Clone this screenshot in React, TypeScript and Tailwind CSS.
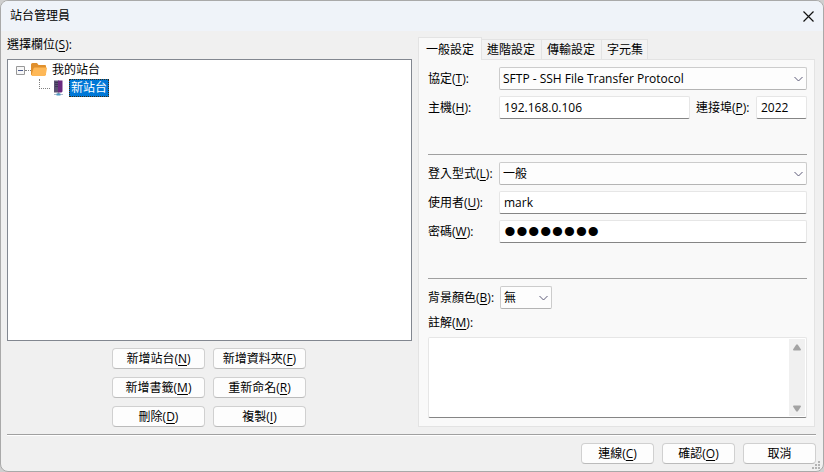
import { useState } from 'react';
import type { ReactNode } from 'react';

const tabs = ['一般設定', '進階設定', '傳輸設定', '字元集'];

const siteActions = [
  { label: '新增站台', hotkey: 'N' },
  { label: '新增資料夾', hotkey: 'F' },
  { label: '新增書籤', hotkey: 'M' },
  { label: '重新命名', hotkey: 'R' },
  { label: '刪除', hotkey: 'D' },
  { label: '複製', hotkey: 'I' },
];

const inputClass =
  'block h-[23px] w-full min-w-0 rounded-[2px] border border-[#e6e6e6] border-b-[#858585] bg-white px-1 text-black outline-none';

function Hotkey({ children }: { children: ReactNode }) {
  return (
    <>
      (<span className="underline underline-offset-2">{children}</span>)
    </>
  );
}

function FieldLabel({ id, text, hotkey }: { id: string; text: string; hotkey: string }) {
  return (
    <label htmlFor={id} className="whitespace-nowrap">
      {text}
      <Hotkey>{hotkey}</Hotkey>:
    </label>
  );
}

function PushButton({ label, hotkey, className }: { label: string; hotkey?: string; className: string }) {
  return (
    <button
      type="button"
      className={`flex h-[21px] items-center justify-center rounded border border-[#d0d0d0] border-b-[#bbbbbb] bg-[#fdfdfd] leading-4 whitespace-nowrap hover:bg-[#e0eef9] ${className}`}
    >
      <span>
        {label}
        {hotkey && <Hotkey>{hotkey}</Hotkey>}
      </span>
    </button>
  );
}

function SelectBox({ id, options, className }: { id: string; options: string[]; className: string }) {
  return (
    <div className={`relative ${className}`}>
      <select
        id={id}
        className="block h-[23px] w-full appearance-none rounded-[2px] border border-[#cccccc] border-b-[#b4b4b4] bg-[#fdfdfd] pr-5 pl-[3px] outline-none"
      >
        {options.map((option) => (
          <option key={option}>{option}</option>
        ))}
      </select>
      <svg
        className="pointer-events-none absolute top-[9px] right-1 h-[7px] w-[9px]"
        viewBox="0 0 9 7"
        fill="none"
        stroke="#5d5a78"
      >
        <path d="M0.5 1 4.5 5 8.5 1" />
      </svg>
    </div>
  );
}

function FolderIcon() {
  return (
    <svg className="h-4 w-4" viewBox="0 0 16 16">
      <path d="M0 2.500Q0 1 1.500 1H6l1.500 2H14q1 0 1 1v9H0z" fill="#e0902d" />
      <path d="M2.500 6.500Q2.800 5.500 4 5.500h11.500q.7 0 .5.8l-1.200 6.700q-.2 1-1.300 1H1.500Q.4 14 .6 12.800z" fill="#feb857" />
    </svg>
  );
}

function ServerIcon() {
  return (
    <svg className="h-4 w-4" viewBox="0 0 16 16">
      <path d="M4 .5h5v12H4z" fill="#5a5272" />
      <path d="M8 .5h4.500v11l-1 1H8z" fill="#6b2a80" />
      <path d="M5 2.500h3M5 4.500h3M5 6.500h3" stroke="#3f3556" />
      <path d="M8.500 12.500v2" stroke="#8c8c9c" strokeWidth="2" />
      <path d="M4 14.500h9" stroke="#a9b9cb" />
      <path d="M6.500 14.500h4" stroke="#4f9cc4" strokeWidth="2" />
    </svg>
  );
}

function SiteTree() {
  return (
    <ul className="min-h-[282px] flex-1 border border-[#828790] bg-white pt-px pl-2">
      <li>
        <div className="flex h-[18px] items-center">
          <button type="button" aria-label="收合">
            <svg className="h-[9px] w-[9px]" viewBox="0 0 9 9">
              <path d="M.5.5h8v8h-8z" fill="#f7f7f7" stroke="#989898" />
              <path d="M2 4.500h5" stroke="#4b5a8c" />
            </svg>
          </button>
          <span className="w-[6px] border-t border-dotted border-[#808080]" />
          <FolderIcon />
          <span className="ml-[3px] px-[2px]">我的站台</span>
        </div>
        <ul>
          <li className="flex h-[18px] items-center pl-[23px]">
            <span className="h-[10px] w-[11px] self-start border-b border-l border-dotted border-[#808080]" />
            <ServerIcon />
            <span className="ml-[3px] flex h-[18px] items-center border border-dotted border-[#3a2a10] bg-[#0078d7] px-px text-white">
              新站台
            </span>
          </li>
        </ul>
      </li>
    </ul>
  );
}

export default function App() {
  const [activeTab, setActiveTab] = useState(0);

  return (
    <div className="min-h-screen bg-[#cfcfcf] font-['Open_Sans','Noto_Sans_CJK_TC',sans-serif] text-xs text-black">
      <div className="flex min-h-screen flex-col overflow-hidden rounded-lg border border-[#a9a9a9] bg-[#f0f0f0]">
        {/* Title bar */}
        <header className="flex h-[30px] items-center justify-between bg-[#eff3f9] pr-[9px] pl-[9px]">
          <h1>站台管理員</h1>
          <button type="button" aria-label="關閉">
            <svg className="h-[11px] w-[11px]" viewBox="0 0 11 11" stroke="#111111" strokeWidth="1.2">
              <path d="M.5.5l10 10M10.500.5l-10 10" />
            </svg>
          </button>
        </header>

        <main className="flex flex-1 gap-[6px] pt-[5px] pr-2 pb-[7px] pl-[6px]">
          {/* Site list */}
          <section className="flex w-[405px] min-w-0 flex-col">
            <h2 className="h-[23px] leading-[18px]">
              選擇欄位
              <Hotkey>S</Hotkey>:
            </h2>
            <SiteTree />
            <div className="mt-[7px] grid grid-cols-[93px_93px] justify-center gap-2 pr-px">
              {siteActions.map((action) => (
                <PushButton key={action.label} {...action} className="w-full" />
              ))}
            </div>
          </section>

          {/* Settings */}
          <section className="flex min-w-0 flex-1 flex-col">
            <div className="flex items-end pt-px" role="tablist">
              {tabs.map((tab, index) => (
                <button
                  key={tab}
                  type="button"
                  role="tab"
                  aria-selected={index === activeTab}
                  onClick={() => setActiveTab(index)}
                  className={
                    index === activeTab
                      ? 'z-10 -mb-px h-[23px] border border-b-0 border-[#e3e3e3] bg-[#f9f9f9] px-[7px] leading-[19px]'
                      : 'h-5 border border-b-0 border-l-0 border-[#e3e3e3] bg-[#f3f3f3] pr-[6px] pl-[5px] leading-[19px] last:pr-1'
                  }
                >
                  {tab}
                </button>
              ))}
            </div>

            <div className="flex flex-1 flex-col border border-[#e3e3e3] bg-[#f9f9f9] pt-[7px] pr-[7px] pb-2 pl-[9px]">
              <div className="grid grid-cols-[71px_minmax(0,1fr)] items-center gap-y-[6px]">
                <FieldLabel id="protocol" text="協定" hotkey="T" />
                <SelectBox id="protocol" options={['SFTP - SSH File Transfer Protocol']} className="w-full" />
                <FieldLabel id="host" text="主機" hotkey="H" />
                <div className="flex items-center">
                  <input id="host" className={inputClass} defaultValue="192.168.0.106" />
                  <span className="w-[66px] shrink-0 pl-[6px]">
                    <FieldLabel id="port" text="連接埠" hotkey="P" />
                  </span>
                  <div className="w-[51px] shrink-0">
                    <input id="port" className={inputClass} defaultValue="2022" />
                  </div>
                </div>
              </div>

              <hr className="mt-[35px] mb-[7px] border-[#a0a0a0]" />

              <div className="grid grid-cols-[71px_minmax(0,1fr)] items-center gap-y-[6px]">
                <FieldLabel id="logon" text="登入型式" hotkey="L" />
                <SelectBox id="logon" options={['一般']} className="w-full" />
                <FieldLabel id="user" text="使用者" hotkey="U" />
                <input id="user" className={inputClass} defaultValue="mark" />
                <FieldLabel id="password" text="密碼" hotkey="W" />
                <input
                  id="password"
                  type="password"
                  className={`${inputClass} font-['Liberation_Sans',sans-serif] text-[34px]`}
                  defaultValue="password"
                />
              </div>

              <hr className="mt-[35px] mb-[7px] border-[#a0a0a0]" />

              <div className="grid grid-cols-[72px_minmax(0,1fr)] items-center">
                <FieldLabel id="color" text="背景顏色" hotkey="B" />
                <SelectBox id="color" options={['無']} className="w-[52px]" />
              </div>

              <div className="mt-[5px] h-[23px] leading-[18px]">
                <FieldLabel id="comments" text="註解" hotkey="M" />
              </div>
              <div className="flex min-h-[81px] flex-1 rounded-[2px] border border-[#e6e6e6] border-b-[#858585] bg-white">
                <textarea id="comments" className="min-w-0 flex-1 resize-none px-1 outline-none" />
                <div className="my-px mr-px flex w-4 flex-col items-center justify-between bg-[#f0f0f0] pt-[5px] pb-1">
                  <svg className="h-[7px] w-2" viewBox="0 0 8 7" fill="#a3a3a3">
                    <path d="M3.300.5h1.400L8 5.500 7.500 6.500H.5L0 5.500z" />
                  </svg>
                  <svg className="h-[7px] w-2" viewBox="0 0 8 7" fill="#a3a3a3">
                    <path d="M3.300 6.500h1.400L8 1.500 7.500.5H.5L0 1.500z" />
                  </svg>
                </div>
              </div>
            </div>
          </section>
        </main>

        {/* Dialog buttons */}
        <footer className="relative pr-[7px] pb-[7px] pl-[6px]">
          <div className="h-[2px] border-t border-[#a0a0a0] bg-white" />
          <div className="flex justify-end gap-2 pt-[7px]">
            <PushButton label="連線" hotkey="C" className="w-[73px]" />
            <PushButton label="確認" hotkey="O" className="w-[73px]" />
            <PushButton label="取消" className="w-[73px]" />
          </div>
          <svg className="absolute right-[3px] bottom-[2px] h-2 w-2" viewBox="0 0 8 8" fill="#b4b4b4">
            <path d="M6 0h2v2H6zM3 3h2v2H3zM6 3h2v2H6zM0 6h2v2H0zM3 6h2v2H3zM6 6h2v2H6z" />
          </svg>
        </footer>
      </div>
    </div>
  );
}
